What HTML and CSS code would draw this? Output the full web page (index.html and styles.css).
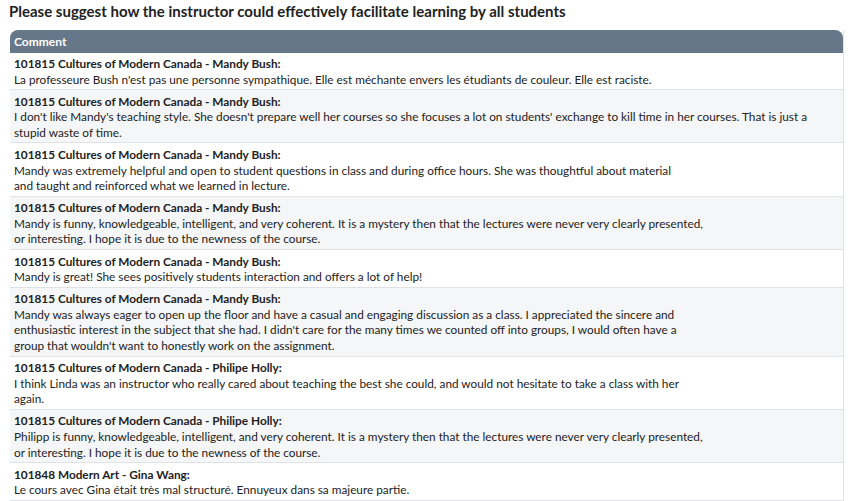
FILE: index.html
```html
<!DOCTYPE html>
<html>
<head>
<meta charset="utf-8">
<link rel="stylesheet" href="styles.css">
</head>
<body>
<h1 class="title">Please suggest how the instructor could effectively facilitate learning by all students</h1>
<div class="table">
  <div class="head">Comment</div>
  <div class="row"><b>101815 Cultures of Modern Canada - Mandy Bush:</b><br>La professeure Bush n'est pas une personne sympathique. Elle est méchante envers les étudiants de couleur. Elle est raciste.</div>
  <div class="row alt"><b>101815 Cultures of Modern Canada - Mandy Bush:</b><br>I don't like Mandy's teaching style. She doesn't prepare well her courses so she focuses a lot on students' exchange to kill time in her courses. That is just a<br>stupid waste of time.</div>
  <div class="row"><b>101815 Cultures of Modern Canada - Mandy Bush:</b><br>Mandy was extremely helpful and open to student questions in class and during office hours. She was thoughtful about material<br>and taught and reinforced what we learned in lecture.</div>
  <div class="row alt"><b>101815 Cultures of Modern Canada - Mandy Bush:</b><br>Mandy is funny, knowledgeable, intelligent, and very coherent. It is a mystery then that the lectures were never very clearly presented,<br>or interesting. I hope it is due to the newness of the course.</div>
  <div class="row"><b>101815 Cultures of Modern Canada - Mandy Bush:</b><br>Mandy is great! She sees positively students interaction and offers a lot of help!</div>
  <div class="row alt"><b>101815 Cultures of Modern Canada - Mandy Bush:</b><br>Mandy was always eager to open up the floor and have a casual and engaging discussion as a class. I appreciated the sincere and<br>enthusiastic interest in the subject that she had. I didn't care for the many times we counted off into groups, I would often have a<br>group that wouldn't want to honestly work on the assignment.</div>
  <div class="row"><b>101815 Cultures of Modern Canada - Philipe Holly:</b><br>I think Linda was an instructor who really cared about teaching the best she could, and would not hesitate to take a class with her<br>again.</div>
  <div class="row alt"><b>101815 Cultures of Modern Canada - Philipe Holly:</b><br>Philipp is funny, knowledgeable, intelligent, and very coherent. It is a mystery then that the lectures were never very clearly presented,<br>or interesting. I hope it is due to the newness of the course.</div>
  <div class="row"><b>101848 Modern Art - Gina Wang:</b><br>Le cours avec Gina était très mal structuré. Ennuyeux dans sa majeure partie.</div>
</div>
</body>
</html>
```
FILE: styles.css
```css
html, body {
  margin: 0;
  padding: 0;
  background: #ffffff;
}
body {
  padding: 0 8px 0 10px;
  font-family: Lato, "Liberation Sans", sans-serif;
  color: #222222;
}
.title {
  margin: 0 0 0 -1px;
  padding-top: 2px;
  font-size: 15px;
  font-weight: bold;
  line-height: 19px;
  height: 27.5px;
  color: #222;
}
.table {
  width: 834px;
  border-right: 1px solid #dfe3e7;
  border-bottom: 1px solid #dfe3e7;
  box-sizing: border-box;
}
.head {
  background: #66778a;
  color: #ffffff;
  font-weight: bold;
  font-size: 12px;
  line-height: 15px;
  padding: 4px 4px 4px 4px;
  border-radius: 8px 8px 0 0;
}
.row {
  font-size: 11.8px;
  line-height: 15.6px;
  padding: 3.5px 4px 2px 4px;
  border-bottom: 1px solid #dfe3e7;
  background: #ffffff;
}
.row:last-child {
  border-bottom: none;
}
.row.alt {
  background: #f5f6f8;
}
.row b {
  font-weight: bold;
}
```
